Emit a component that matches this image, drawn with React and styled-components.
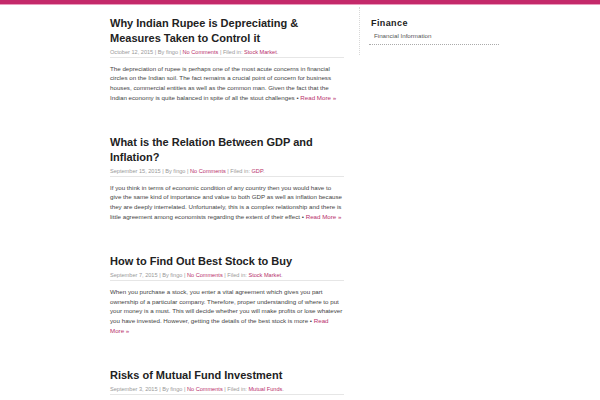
import React from "react";
import styled, { createGlobalStyle } from "styled-components";

const GlobalStyle = createGlobalStyle`
  html, body { margin: 0; padding: 0; background: #fff; }
  body { font-family: "Liberation Sans", Arial, sans-serif; color: #444; }
  * { box-sizing: border-box; }
`;

const TopBar = styled.div`
  height: 5px;
  background: #c4296a;
  border-bottom: 1px solid #ea9cbd;
`;

const Wrapper = styled.div`
  display: flex;
  align-items: flex-start;
  padding-left: 110px;
`;

const Main = styled.main`
  width: 234px;
  padding-top: 11px;
`;

const Post = styled.article`
  margin-bottom: 32.5px;
`;

const Title = styled.h2`
  margin: 0;
  font-size: 11px;
  line-height: 15px;
  font-weight: bold;
  color: #222;
`;

const Meta = styled.div`
  margin-top: 1.5px;
  padding-bottom: 1px;
  border-bottom: 1px solid #e6e6e6;
  font-size: 5.6px;
  line-height: 8px;
  color: #999;
`;

const Link = styled.a`
  color: #b8306c;
  text-decoration: none;
`;

const Body = styled.p`
  margin: 6px 0 0;
  font-size: 6.2px;
  line-height: 9.8px;
  color: #444;
`;

const Sidebar = styled.aside`
  margin-left: 15px;
  margin-top: 2px;
  height: 48px;
  border-left: 1px dotted #d8d8d8;
  padding-left: 9px;
  padding-top: 10px;
`;

const WidgetTitle = styled.h3`
  margin: 0 0 3px;
  padding-left: 2px;
  font-size: 9px;
  line-height: 12px;
  letter-spacing: 0.4px;
  font-weight: bold;
  color: #222;
`;

const WidgetList = styled.ul`
  list-style: none;
  margin: 0;
  padding: 0;
  width: 130px;
`;

const WidgetItem = styled.li`
  padding: 0 0 4px 5px;
  border-bottom: 1px dotted #aaa;
  font-size: 6.2px;
  line-height: 8px;
  color: #555;
`;

const posts = [
  {
    title: "Why Indian Rupee is Depreciating & Measures Taken to Control it",
    date: "October 12, 2015",
    cat: "Stock Market",
    body: "The depreciation of rupee is perhaps one of the most acute concerns in financial circles on the Indian soil. The fact remains a crucial point of concern for business houses, commercial entities as well as the common man. Given the fact that the Indian economy is quite balanced in spite of all the stout challenges",
  },
  {
    title: "What is the Relation Between GDP and Inflation?",
    date: "September 15, 2015",
    cat: "GDP",
    body: "If you think in terms of economic condition of any country then you would have to give the same kind of importance and value to both GDP as well as inflation because they are deeply interrelated. Unfortunately, this is a complex relationship and there is little agreement among economists regarding the extent of their effect",
  },
  {
    title: "How to Find Out Best Stock to Buy",
    date: "September 7, 2015",
    cat: "Stock Market",
    body: "When you purchase a stock, you enter a vital agreement which gives you part ownership of a particular company. Therefore, proper understanding of where to put your money is a must. This will decide whether you will make profits or lose whatever you have invested. However, getting the details of the best stock is more",
  },
  {
    title: "Risks of Mutual Fund Investment",
    date: "September 3, 2015",
    cat: "Mutual Funds",
    body: "",
  },
];

export default function App() {
  return (
    <>
      <GlobalStyle />
      <TopBar />
      <Wrapper>
        <Main>
          {posts.map((p) => (
            <Post key={p.title}>
              <Title>{p.title}</Title>
              <Meta>
                {p.date} | By fingo | <Link href="#">No Comments</Link> | Filed in:{" "}
                <Link href="#">{p.cat}</Link>.
              </Meta>
              {p.body && (
                <Body>
                  {p.body} • <Link href="#">Read More »</Link>
                </Body>
              )}
            </Post>
          ))}
        </Main>
        <Sidebar>
          <WidgetTitle>Finance</WidgetTitle>
          <WidgetList>
            <WidgetItem>Financial Information</WidgetItem>
          </WidgetList>
        </Sidebar>
      </Wrapper>
    </>
  );
}
